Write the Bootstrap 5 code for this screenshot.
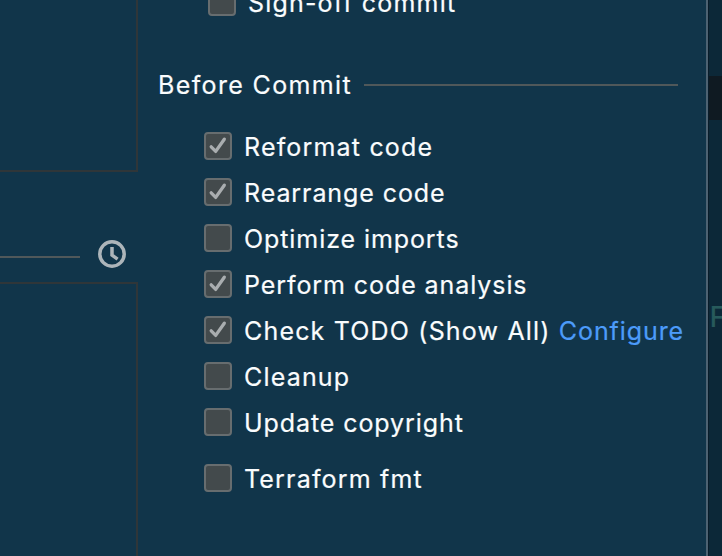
<!DOCTYPE html>
<html lang="en">
<head>
<meta charset="utf-8">
<title>Before Commit</title>
<link rel="stylesheet" href="https://cdn.jsdelivr.net/npm/bootstrap@5.3.0/dist/css/bootstrap.min.css">
<style>
html, body { height: 100%; }
body { background: #11354a; color: #fafcfd; font-family: Inter, "Open Sans", sans-serif; font-size: 25px; letter-spacing: .92px; line-height: 28px; -webkit-text-stroke: .2px; }
.window { width: 722px; height: 556px; }
.side { width: 138px; }
.pane { border: 2px solid #2f3639; border-left: 0; }
.pane-top { height: 172px; border-top: 0; }
.pane-bottom { border-bottom: 0; }
.side-tools { height: 110px; padding: 68px 12px 0 0; }
.rule { height: 2px; background: #50585a; }
.side-rule { width: 80px; }
.options { width: 568px; }
.sign-off { height: 28px; margin: -12px 0 0 70px; }
.section-title { height: 28px; margin: 55px 28px 0 20px; }
.title-rule { margin-left: 12px; }
.checks { margin: 33px 0 0 66px; gap: 18px; }
.check-row { height: 28px; gap: 12px; white-space: nowrap; }
.check-row > span:last-child { padding-top: 2px; }
.plugin-row { margin-top: 10px; }
.track-1 { letter-spacing: 1.18px; }
.track-2 { letter-spacing: 1.36px; }
.tick-box { width: 28px; height: 28px; background: #434a4c; border: 2px solid #676d6f; border-radius: 4px; }
.tick-box svg { width: 24px; height: 24px; display: block; }
.configure { color: #4c9bfa; letter-spacing: .92px; }
.edge { width: 3px; background: #091c2a; border-left: 2px solid #4d6272; }
.editor { background: #0c2838; }
.caret-line { height: 44px; margin-top: 76px; background: #0f1a22; }
.code { color: #275a5b; font: 31px/36px "Liberation Mono", monospace; letter-spacing: 0; margin-top: 181px; }
</style>
<script src="https://cdn.jsdelivr.net/npm/bootstrap@5.3.0/dist/js/bootstrap.bundle.min.js"></script>
</head>
<body class="overflow-hidden">
<svg class="d-none"><symbol id="tick" viewBox="0 0 24 24"><path d="M5.2 12.8 9.7 17.4 18.3 5.2" fill="none" stroke="#a9adaf" stroke-width="3.3" stroke-linecap="round" stroke-linejoin="round"/></symbol></svg>
<div class="window d-flex overflow-hidden">
  <aside class="side d-flex flex-column flex-shrink-0">
    <div class="pane pane-top flex-shrink-0"></div>
    <div class="side-tools d-flex justify-content-between align-items-start flex-shrink-0">
      <div class="rule side-rule mt-3"></div>
      <svg width="28" height="28" viewBox="0 0 28 28" fill="none" stroke="#adb5ba"><circle cx="14" cy="14" r="12.2" stroke-width="3.5"/><path d="M14 7v8.2l5.6 3.9" stroke-width="3.5"/></svg>
    </div>
    <div class="pane pane-bottom flex-grow-1"></div>
  </aside>
  <main class="options d-flex flex-column flex-shrink-0">
    <div class="check-row sign-off d-flex align-items-center"><span class="tick-box flex-shrink-0"></span><span class="track-1">Sign-off commit</span></div>
    <div class="section-title d-flex align-items-center"><span class="text-nowrap track-2">Before Commit</span><div class="rule title-rule flex-grow-1"></div></div>
    <div class="checks d-flex flex-column">
      <div class="check-row d-flex align-items-center"><span class="tick-box flex-shrink-0"><svg><use href="#tick"/></svg></span><span class="track-1">Reformat code</span></div>
      <div class="check-row d-flex align-items-center"><span class="tick-box flex-shrink-0"><svg><use href="#tick"/></svg></span><span>Rearrange code</span></div>
      <div class="check-row d-flex align-items-center"><span class="tick-box flex-shrink-0"></span><span>Optimize imports</span></div>
      <div class="check-row d-flex align-items-center"><span class="tick-box flex-shrink-0"><svg><use href="#tick"/></svg></span><span>Perform code analysis</span></div>
      <div class="check-row d-flex align-items-center"><span class="tick-box flex-shrink-0"><svg><use href="#tick"/></svg></span><span class="track-1">Check TODO (Show All) <a class="configure text-decoration-none" href="#">Configure</a></span></div>
      <div class="check-row d-flex align-items-center"><span class="tick-box flex-shrink-0"></span><span class="track-1">Cleanup</span></div>
      <div class="check-row d-flex align-items-center"><span class="tick-box flex-shrink-0"></span><span>Update copyright</span></div>
      <div class="check-row plugin-row d-flex align-items-center"><span class="tick-box flex-shrink-0"></span><span class="track-1">Terraform fmt</span></div>
    </div>
  </main>
  <div class="edge flex-shrink-0"></div>
  <div class="editor flex-grow-1 overflow-hidden">
    <div class="caret-line"></div>
    <div class="code">F</div>
  </div>
</div>
</body>
</html>
